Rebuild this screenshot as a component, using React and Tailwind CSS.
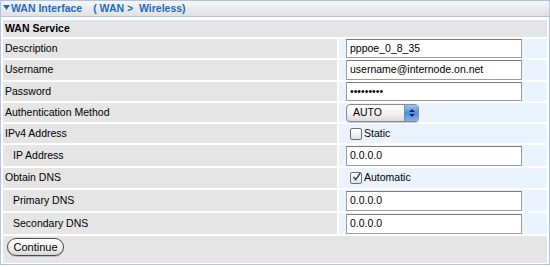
import React from 'react';

const font = { fontFamily: '"Liberation Sans", Arial, sans-serif' };

// Text input as drawn by the router's form
const TextField = ({ value, h }) => (
  <div
    className={`${h} w-[176px] border border-[#9b9b9b] border-t-[#7a7a7a] bg-white flex items-center px-[3px] text-[10.5px] text-black`}
  >
    {value}
  </div>
);

const Checkbox = ({ checked, label }) => (
  <div className="flex items-center gap-[2px] pl-[4px]">
    <div className="w-[12px] h-[12px] rounded-[2px] border border-[#6f6f6f] bg-gradient-to-b from-white to-[#e4e4e4] flex items-center justify-center">
      {checked && (
        <svg width="12" height="12" viewBox="0 0 12 12" className="-mt-[2px] ml-[1px]">
          <path d="M2.5 6.5 L5 9.5 L10.5 1.5" stroke="#1d3f73" strokeWidth="2" fill="none" strokeLinecap="round" strokeLinejoin="round" />
        </svg>
      )}
    </div>
    <span className="text-[10.5px] text-black">{label}</span>
  </div>
);

const SelectBox = () => (
  <div className="h-[18px] w-[73px] rounded-[4px] border border-[#8a8a8a] bg-gradient-to-b from-white via-[#f3f3f3] to-[#dcdcdc] flex items-center shadow-[0_1px_0_#c8c8c8] overflow-hidden">
    <span className="flex-1 pl-[6px] text-[10.5px] text-black">AUTO</span>
    <div className="w-[14px] h-full bg-gradient-to-b from-[#9cc3f2] via-[#4f8fe0] to-[#7fb3ef] border-l border-[#6e8fc0] flex flex-col items-center justify-center gap-[2px]">
      <svg width="6" height="3" viewBox="0 0 6 3"><path d="M0 3 L3 0 L6 3 Z" fill="#10284d" /></svg>
      <svg width="6" height="3" viewBox="0 0 6 3"><path d="M0 0 L3 3 L6 0 Z" fill="#10284d" /></svg>
    </div>
  </div>
);

const rows = [
  { label: 'Description', h: 'h-[19px]', field: <TextField value="pppoe_0_8_35" h="h-[19px]" /> },
  { label: 'Username', h: 'h-[20px]', field: <TextField value="username@internode.on.net" h="h-[20px]" /> },
  { label: 'Password', h: 'h-[19px]', field: <TextField value="•••••••••" h="h-[19px]" /> },
  { label: 'Authentication Method', h: 'h-[19px]', field: <SelectBox /> },
  { label: 'IPv4 Address', h: 'h-[19px]', field: <Checkbox label="Static" /> },
  { label: 'IP Address', h: 'h-[21px]', indent: true, field: <TextField value="0.0.0.0" h="h-[20px]" /> },
  { label: 'Obtain DNS', h: 'h-[20px]', field: <Checkbox checked label="Automatic" /> },
  { label: 'Primary DNS', h: 'h-[21px]', indent: true, field: <TextField value="0.0.0.0" h="h-[20px]" /> },
  { label: 'Secondary DNS', h: 'h-[21px]', indent: true, field: <TextField value="0.0.0.0" h="h-[20px]" /> },
];

export default function App() {
  return (
    <div className="w-[550px] h-[267px] bg-white" style={font}>
      <div className="w-[550px] h-[265px] border border-[#aac6e4] flex flex-col">
        {/* Title bar */}
        <div className="h-[16px] border-b border-[#aac6e4] bg-gradient-to-b from-[#f6f6f6] to-[#e1e1e1] flex items-center pl-[2px] text-[10.5px] font-bold text-[#1a6cc0]">
          <svg width="7" height="5" viewBox="0 0 7 5" className="mr-[1px] -mt-[3px]">
            <path d="M0 0 L7 0 L3.5 5 Z" fill="#1a6cc0" />
          </svg>
          <span>WAN Interface</span>
          <span className="ml-[11px]">( WAN &gt;&nbsp; Wireless)</span>
        </div>

        {/* Form table */}
        <div className="flex flex-col gap-[2px] px-[2px] pt-[3px] text-[10.5px] text-black">
          <div className="h-[17px] bg-[#e5e5e5] flex items-center pl-[2px] font-bold">WAN Service</div>

          {rows.map((row) => (
            <div key={row.label} className={`${row.h} flex gap-[2px]`}>
              <div className={`w-[334px] bg-[#e5e5e5] flex items-center ${row.indent ? 'pl-[10px]' : 'pl-[2px]'}`}>
                {row.label}
              </div>
              <div className="flex-1 bg-[#ebf3fe] flex items-center pl-[7px]">{row.field}</div>
            </div>
          ))}

          <div className="h-[27px] bg-[#e5e5e5] pt-[2px] pl-[4px]">
            <button className="h-[18px] w-[57px] rounded-full border border-[#4a4a4a] bg-gradient-to-b from-white via-[#f4f4f4] to-[#d6d6d6] text-[11px] text-black flex items-center justify-center shadow-[0_1px_0_#bdbdbd]">
              Continue
            </button>
          </div>
        </div>
      </div>
    </div>
  );
}
